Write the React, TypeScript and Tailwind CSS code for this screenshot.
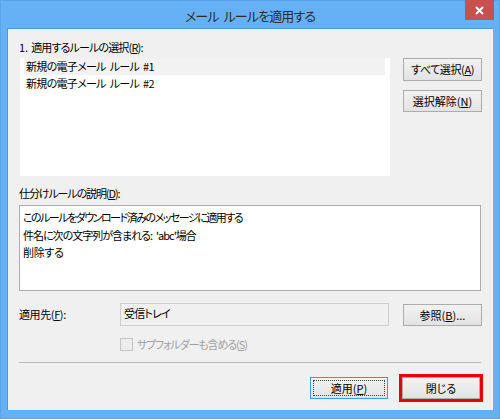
import React from "react";

function Btn({ children, className = "" }: { children: React.ReactNode; className?: string }) {
  return (
    <div
      className={
        "flex items-center justify-center border border-[#acacac] bg-linear-to-b from-[#f2f2f2] to-[#e3e3e3] text-black " +
        className
      }
    >
      {children}
    </div>
  );
}

export default function App() {
  return (
    <div
      className={
        'w-[500px] h-[419px] bg-[#66b1f5] border border-[#5aa3e6] flex flex-col text-black font-["Noto_Sans_CJK_JP","Noto_Sans",sans-serif] [font-feature-settings:"palt"]'
      }
    >
      {/* title bar */}
      <div className="relative h-[27px] flex items-center justify-center shrink-0">
        <span className="text-[13px] tracking-[-0.9px] text-[#2b2b2b] leading-none mt-[2px] whitespace-nowrap">
          メール<span className="ml-[5px]">ルールを適用する</span>
        </span>
        <div className="absolute right-[5px] top-[-1px] w-[29px] h-[20px] bg-[#c75050] flex items-center justify-center">
          <svg width="9" height="9" viewBox="0 0 9 9">
            <path d="M1 1 L8 8 M8 1 L1 8" stroke="#fff" strokeWidth="1.8" />
          </svg>
        </div>
      </div>
      {/* content */}
      <div className="mx-[6px] h-[382px] bg-[#f0f0f0] border-l border-t border-[#4e97dc] flex flex-col px-[11px] text-[11px]">
        <div className="h-[14px] mt-[11px] leading-[14px] whitespace-nowrap tracking-[-0.85px]">
          <span className="tracking-normal">1.</span>
          <span className="ml-[3px]">適用するルールの選択(</span>
          <span className="underline">R</span>):
        </div>
        <div className="flex mt-[4px]">
          <div className="ml-[1px] w-[370px] h-[118px] bg-white flex flex-col pt-0 tracking-[-0.7px]">
            <div className="ml-[4px] mr-[5px] h-[17px] bg-[#f2f2f2] pl-[2px] leading-[17px] whitespace-nowrap">
              新規の電子メール<span className="ml-[4px]">ルール</span><span className="ml-[4px]">#1</span>
            </div>
            <div className="ml-[4px] mr-[5px] h-[17px] pl-[2px] leading-[17px] whitespace-nowrap">
              新規の電子メール<span className="ml-[4px]">ルール</span><span className="ml-[4px]">#2</span>
            </div>
          </div>
          <div className="ml-auto w-[79px] flex flex-col gap-[9px]">
            <Btn className="h-[23px] tracking-[-0.4px]">
              すべて選択(<span className="underline">A</span>)
            </Btn>
            <Btn className="h-[22px]">
              選択解除(<span className="underline">N</span>)
            </Btn>
          </div>
        </div>
        <div className="h-[14px] mt-[10px] leading-[14px] whitespace-nowrap tracking-[-1.1px]">
          仕分けルールの説明(<span className="underline">D</span>):
        </div>
        <div className="mt-[5px] w-[462px] h-[86px] bg-white border border-[#acacac] px-[3px] pt-[3px] leading-[17.5px] whitespace-nowrap">
          <div className="tracking-[-1.5px]">このルールをダウンロード済みのメッセージに適用する</div>
          <div className="tracking-[-1px]">
            件名に次の文字列が含まれる:<span className="ml-[4px]">'abc'場合</span>
          </div>
          <div className="tracking-[-0.3px]">削除する</div>
        </div>
        <div className="flex items-center mt-[12px] h-[23px]">
          <div className="w-[101px] whitespace-nowrap tracking-[-0.4px]">
            適用先(<span className="underline">F</span>):
          </div>
          <div className="w-[269px] h-[23px] border border-[#cfcfcf] bg-[#f0f0f0] px-[3px] leading-[19px] tracking-[-0.8px]">受信トレイ</div>
          <Btn className="ml-auto w-[79px] h-[22px] mt-[1px]">
            参照(<span className="underline">B</span>)...
          </Btn>
        </div>
        <div className="flex items-center mt-[12px] h-[13px] pl-[101px]">
          <div className="w-[13px] h-[13px] border border-[#c5c5c5] bg-[#ececec]" />
          <span className="ml-[4px] text-[#a0a0a0] whitespace-nowrap tracking-[-1.1px]">
            サブフォルダーも含める(<span className="underline">S</span>)
          </span>
        </div>
        <div className="mt-[11px] w-[462px] h-px bg-[#b9b9b9]" />
        <div className="flex justify-end mt-[14px] pr-[2px] gap-[14px]">
          <div className="relative w-[78px] h-[22px] border border-[#3c9ae8] bg-linear-to-b from-[#f2f2f2] to-[#e3e3e3] flex items-center justify-center">
            <div className="absolute inset-[2px] border border-dotted border-[#444]" />
            <span>
              適用(<span className="underline">P</span>)
            </span>
          </div>
          <Btn className="w-[78px] h-[22px] outline-[3px] outline-solid outline-[#e8000b]">閉じる</Btn>
        </div>
      </div>
    </div>
  );
}
